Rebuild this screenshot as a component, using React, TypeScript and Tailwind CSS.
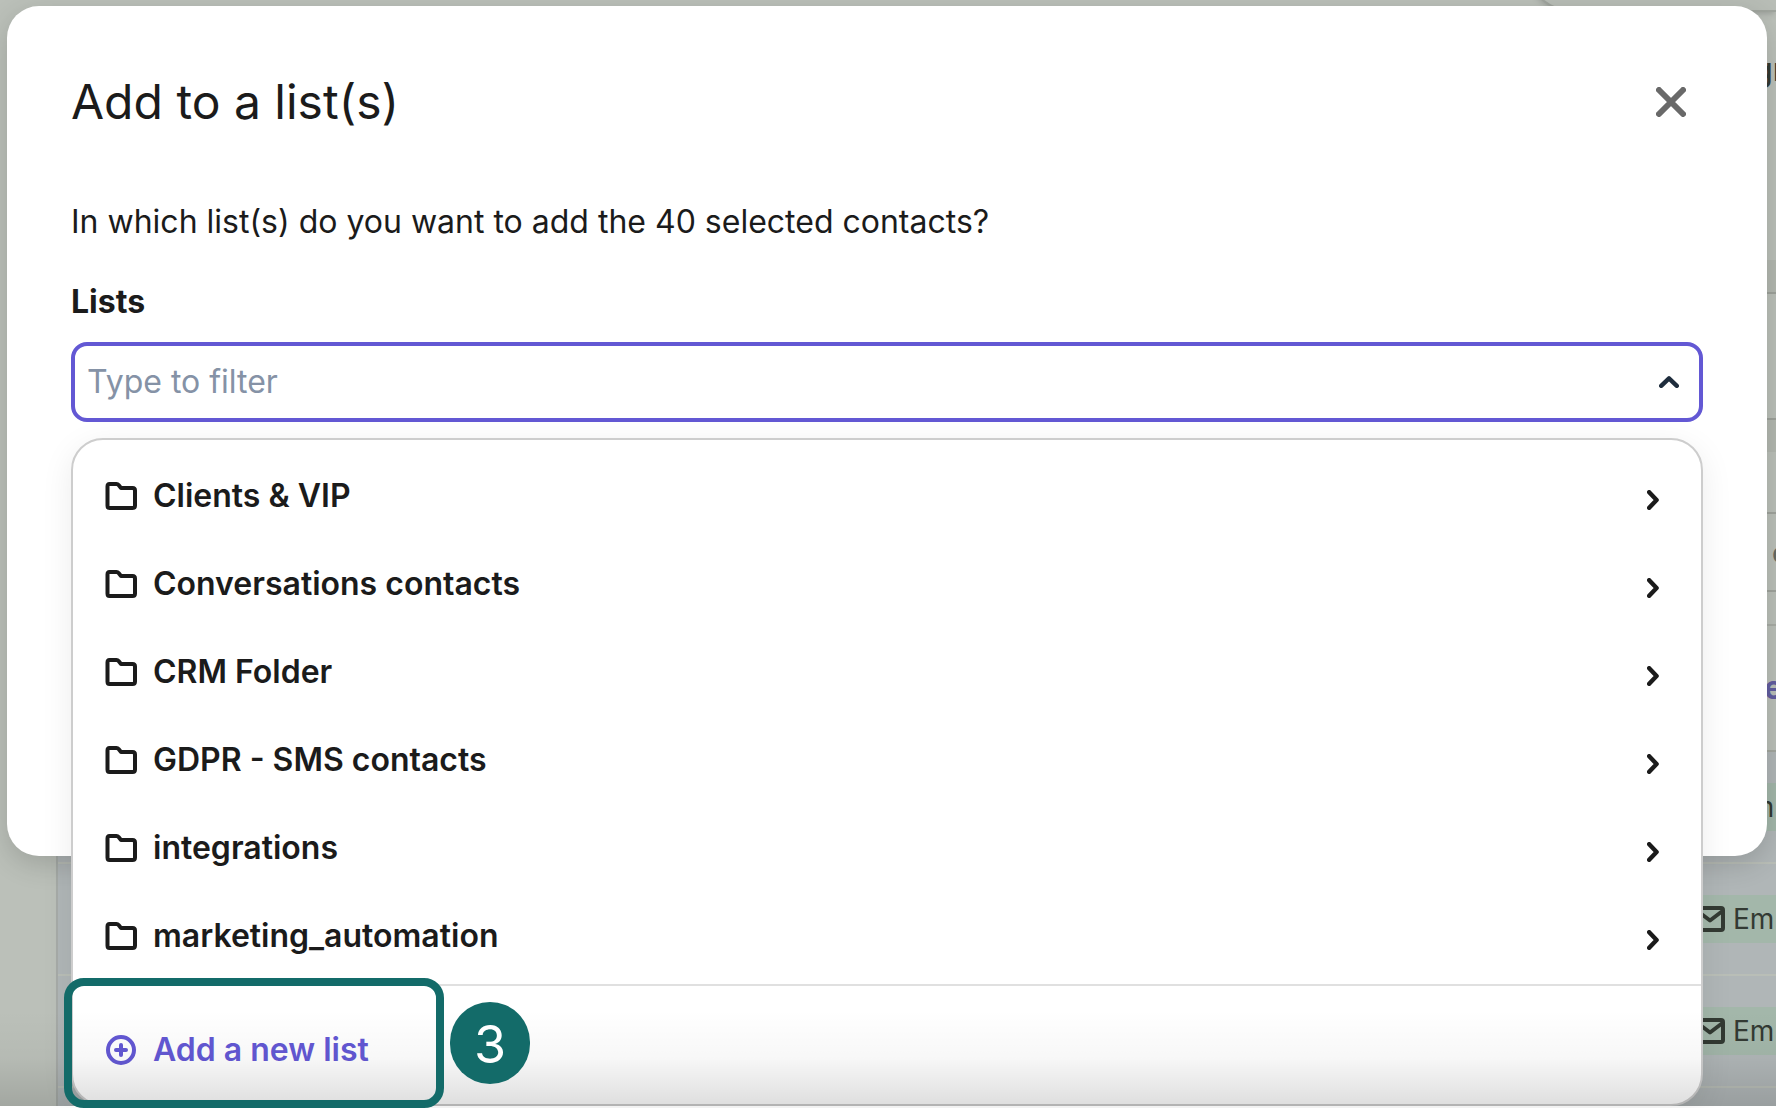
import React, { useState } from 'react'

interface IconProps {
  className?: string
}

const FolderIcon: React.FC<IconProps> = ({ className }) => (
  <svg viewBox="0 0 32 28" fill="none" stroke="currentColor" strokeWidth="4" strokeLinejoin="round" className={className} aria-hidden="true">
    <path d="M2.500 4.500V23.500C2.500 25 3 26 4.500 26H27.500C29 26 30 25 30 23.500V8.500C30 7 29 6 27.500 6H16L13.600 3C13 2.300 12.500 2 11.500 2H4.500C3 2 2.500 3 2.500 4.500Z" />
  </svg>
)

const ChevronIcon: React.FC<IconProps> = ({ className }) => (
  <svg viewBox="0 0 12 20" fill="none" stroke="currentColor" strokeWidth="4.400" strokeLinecap="round" strokeLinejoin="round" className={className} aria-hidden="true">
    <path d="M2.200 2.200L9.600 10L2.200 17.800" />
  </svg>
)

const ChevronUpIcon: React.FC<IconProps> = ({ className }) => (
  <svg viewBox="0 0 20 12" fill="none" stroke="currentColor" strokeWidth="4.400" strokeLinecap="round" strokeLinejoin="round" className={className} aria-hidden="true">
    <path d="M2.200 9.800L10 2.400L17.800 9.800" />
  </svg>
)

const CloseIcon: React.FC<IconProps> = ({ className }) => (
  <svg viewBox="0 0 30 30" fill="none" stroke="currentColor" strokeWidth="6" strokeLinecap="round" className={className} aria-hidden="true">
    <path d="M3 3L27 27M27 3L3 27" />
  </svg>
)

const PlusCircleIcon: React.FC<IconProps> = ({ className }) => (
  <svg viewBox="0 0 30 30" fill="none" stroke="currentColor" strokeLinecap="round" strokeWidth="4" className={className} aria-hidden="true">
    <circle cx="15" cy="15" r="13" />
    <path d="M15 10V20M10 15H20" />
  </svg>
)

const MailIcon: React.FC<IconProps> = ({ className }) => (
  <svg viewBox="0 0 30 26" fill="none" stroke="currentColor" strokeWidth="4" strokeLinejoin="round" className={className} aria-hidden="true">
    <rect x="2" y="2" width="26" height="22" rx="2" />
    <path d="M2.500 5L15 14.500L27.500 5" />
  </svg>
)

const folders = [
  'Clients & VIP',
  'Conversations contacts',
  'CRM Folder',
  'GDPR - SMS contacts',
  'integrations',
  'marketing_automation'
]

const contactRows = [1, 2, 3]

// Contacts page that sits dimmed behind the dialog
const ContactsPage: React.FC = () => (
  <div className="flex grow flex-col overflow-hidden bg-[#bbc0b9] pl-14 text-[#333a33]" aria-hidden="true">
    <div className="flex h-3 justify-end">
      <div className="-mt-12 h-15 w-[251px] rounded-bl-[48px] border-b-2 border-l-2 border-[#9fa49d] bg-[#b8bdb6] shadow-md" />
    </div>
    <div className="flex h-[248px] justify-end">
      <div className="w-[23px] text-[32px] leading-[116px] font-medium whitespace-nowrap">gr</div>
    </div>
    <div className="h-[34px] border-b-2 border-[#9ea29b] bg-[#b3b8b0]" />
    <div className="h-[126px] border-b-2 border-[#9ea29b]" />
    <div className="h-8 bg-[#b3b8b0]" />
    <div className="h-[62px] border-b-2 border-[#a0a49d]" />
    <div className="flex h-[78px] justify-end border-b-2 border-[#a0a49d]">
      <div className="w-1 text-[28px] leading-[78px] font-medium text-[#666b66]">c</div>
    </div>
    <div className="h-[34px] border-b-2 border-[#a9ada6]" />
    <div className="flex h-[126px] justify-end border-b-2 border-[#a3a79f]">
      <div className="w-3 text-[32px] leading-[124px] font-bold text-[#625ea0]">e</div>
    </div>
    <div className="flex grow flex-col border-l-2 border-[#a6aba7] bg-[#b0b6b7]">
      {contactRows.map(row => (
        <div key={row} className="flex h-28 items-center justify-end border-b-2 border-[#b9beb7]">
          <div className="flex h-12 w-[93px] items-center gap-2 bg-[#a3b7aa] pl-3 text-[28px] whitespace-nowrap">
            <MailIcon className="h-[26px] w-[30px] shrink-0" />
            <span>Em</span>
          </div>
        </div>
      ))}
    </div>
  </div>
)

export default function App() {
  const [filter, setFilter] = useState('')

  const visibleFolders = folders.filter(name => name.toLowerCase().includes(filter.toLowerCase()))

  return (
    <div className="relative flex h-screen flex-col overflow-hidden bg-white pb-0.5 font-['Inter',sans-serif] text-[#1b1b1b]">
      <ContactsPage />

      {/* Dialog */}
      <div className="absolute inset-0 pt-1.5 pr-[9px] pl-[7px]">
        <div role="dialog" aria-labelledby="dialog-title" className="min-h-[850px] rounded-[32px] bg-white p-16 shadow-[0_8px_28px_rgba(0,0,0,0.16)]">
          <div className="flex h-16 items-center justify-between">
            <h1 id="dialog-title" className="text-[48px] leading-[64px]">Add to a list(s)</h1>
            <button aria-label="Close" className="mr-[17px] text-[#696969]">
              <CloseIcon className="size-[30px]" />
            </button>
          </div>

          <p className="mt-16 text-[32px] leading-[48px]">In which list(s) do you want to add the 40 selected contacts?</p>

          <label htmlFor="lists" className="mt-8 block text-[32px] leading-[48px] font-bold">Lists</label>

          <div className="relative mt-4">
            <div className="flex h-20 items-center rounded-2xl border-4 border-[#6358d4] pr-5 pl-3">
              <input
                id="lists"
                type="text"
                value={filter}
                onChange={e => setFilter(e.target.value)}
                placeholder="Type to filter"
                className="min-w-0 grow text-[32px] leading-[48px] outline-none placeholder:text-[#8592a6]"
              />
              <ChevronUpIcon className="h-3 w-5 text-[#1f2d3d]" />
            </div>

            {/* Dropdown */}
            <div className="absolute top-full right-0 left-0 mt-4 rounded-[32px] border-2 border-[#cdcdcd] bg-white shadow-[0_8px_32px_rgba(0,0,0,0.08)]">
              <ul className="pt-3 pb-1">
                {visibleFolders.map(name => (
                  <li key={name}>
                    <button className="flex h-22 w-full items-center pr-[42px] pl-8 text-left">
                      <FolderIcon className="h-7 w-8" />
                      <span className="ml-4 grow text-[32px] leading-[48px] font-semibold">{name}</span>
                      <ChevronIcon className="mt-2 h-5 w-3" />
                    </button>
                  </li>
                ))}
              </ul>

              <div className="relative flex h-[120px] border-t-2 border-[#e0e0e0]">
                <button className="flex grow items-center pt-2.5 pl-[33px] text-[#6358d4]">
                  <PlusCircleIcon className="size-[30px]" />
                  <span className="ml-[17px] text-[32px] leading-[48px] font-semibold">Add a new list</span>
                </button>

                {/* Step marker */}
                <div className="pointer-events-none absolute -top-2 -left-[9px] z-20 h-[130px] w-[380px] rounded-[20px] border-8 border-[#136b69]" />
                <div className="absolute top-4 left-[377px] z-20 flex h-[82px] w-20 items-center justify-center rounded-full bg-[#136b69] pt-1 text-[52px] text-white">
                  3
                </div>
              </div>
            </div>
          </div>
        </div>
      </div>

      {/* Fade along the bottom edge */}
      <div className="pointer-events-none absolute inset-x-0 bottom-0.5 z-10 h-24 bg-linear-to-t from-black/13 via-black/3 to-transparent" />
    </div>
  )
}
